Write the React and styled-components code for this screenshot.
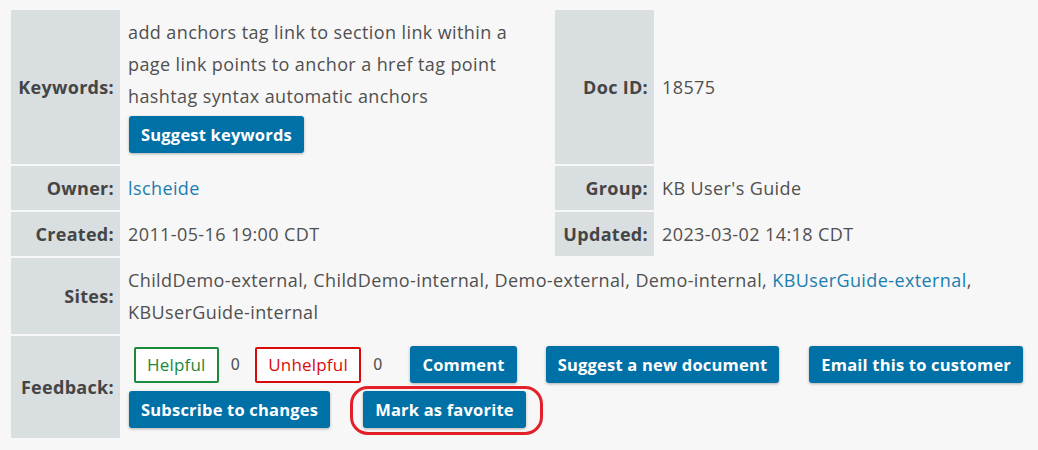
import React from "react";
import styled, { createGlobalStyle } from "styled-components";

const Global = createGlobalStyle`
  html, body { margin: 0; padding: 0; background: #f7f7f7; }
  body { font-family: "Open Sans", "Noto Sans", sans-serif; color: #4d4d4d; }
`;

const Page = styled.div`
  padding: 10px 11px;
  background: #f7f7f7;
`;

const Grid = styled.div`
  display: grid;
  grid-template-columns: 109px 431px 99px 1fr;
  gap: 2px;
`;

const Label = styled.div`
  background: #d9dee0;
  display: flex;
  align-items: center;
  justify-content: flex-end;
  padding: 6px 6px 6px 2px;
  font-weight: 700;
  font-size: 18px;
  letter-spacing: 0.3px;
  color: #454545;
  white-space: nowrap;
`;

const Value = styled.div`
  grid-column: ${(p) => (p.$wide ? "2 / span 3" : "auto")};
  display: flex;
  flex-direction: column;
  justify-content: center;
  align-items: flex-start;
  padding: 6px;
  font-size: 18px;
  letter-spacing: 0.4px;
  line-height: 32px;
  color: #505050;
`;

const Link = styled.a`
  color: #1a7eb0;
  text-decoration: none;
`;

const Site = styled.span`
  white-space: nowrap;
`;

const Button = styled.button`
  font-family: inherit;
  font-size: 16.5px;
  font-weight: 700;
  letter-spacing: 0.2px;
  color: #ffffff;
  background: #0071a7;
  border: none;
  border-radius: 3px;
  height: 37px;
  padding: 0 12px;
  margin: ${(p) => p.$margin || "4px 0 5px 1px"};
  box-shadow: 0 1px 3px rgba(0, 0, 0, 0.3);
  white-space: nowrap;
  cursor: pointer;
`;

const VoteButton = styled.button`
  font-family: inherit;
  font-size: 17px;
  font-weight: 400;
  letter-spacing: 0.2px;
  background: #ffffff;
  color: ${(p) => p.$color};
  border: 2px solid ${(p) => p.$color};
  border-radius: 2px;
  height: 36px;
  padding: 0 11px;
  margin: 4px 0;
  cursor: pointer;
`;

const Count = styled.span`
  font-family: "DejaVu Sans", sans-serif;
  font-size: 15px;
  letter-spacing: 0;
  color: #555555;
  margin: 0 15px 0 12px;
`;

const FeedbackLine = styled.div`
  display: flex;
  align-items: center;
  padding-left: ${(p) => p.$indent || "0"};
`;

const Highlight = styled.span`
  position: relative;
  display: inline-flex;
  margin-left: 33px;
`;

const Ring = styled.span`
  position: absolute;
  left: -13px;
  right: -17px;
  top: -1px;
  bottom: -3px;
  border: 3px solid #e3202a;
  border-radius: 18px;
  pointer-events: none;
`;

export default function App() {
  return (
    <>
      <Global />
      <Page>
        <Grid>
          <Label>Keywords:</Label>
          <Value>
            <div>
              add anchors tag link to section link within a page link points to
              anchor a href tag point hashtag syntax automatic anchors
            </div>
            <Button>Suggest keywords</Button>
          </Value>
          <Label>Doc ID:</Label>
          <Value>18575</Value>

          <Label>Owner:</Label>
          <Value>
            <Link href="#">lscheide</Link>
          </Value>
          <Label>Group:</Label>
          <Value>KB User's Guide</Value>

          <Label>Created:</Label>
          <Value>2011-05-16 19:00 CDT</Value>
          <Label>Updated:</Label>
          <Value>2023-03-02 14:18 CDT</Value>

          <Label>Sites:</Label>
          <Value $wide>
            <div>
              <Site>ChildDemo-external,</Site> <Site>ChildDemo-internal,</Site>{" "}
              <Site>Demo-external,</Site> <Site>Demo-internal,</Site>{" "}
              <Site>
                <Link href="#">KBUserGuide-external</Link>,
              </Site>{" "}
              <Site>KBUserGuide-internal</Site>
            </div>
          </Value>

          <Label>Feedback:</Label>
          <Value $wide>
            <FeedbackLine $indent="6px">
              <VoteButton $color="#1b8a3a">Helpful</VoteButton>
              <Count>0</Count>
              <VoteButton $color="#d90a0a">Unhelpful</VoteButton>
              <Count>0</Count>
              <Button $margin="4px 0 4px 13px">Comment</Button>
              <Button $margin="4px 0 4px 29px">Suggest a new document</Button>
              <Button $margin="4px 0 4px 30px">Email this to customer</Button>
            </FeedbackLine>
            <FeedbackLine>
              <Button $margin="4px 0 4px 1px">Subscribe to changes</Button>
              <Highlight>
                <Button $margin="4px 0">Mark as favorite</Button>
                <Ring />
              </Highlight>
            </FeedbackLine>
          </Value>
        </Grid>
      </Page>
    </>
  );
}
